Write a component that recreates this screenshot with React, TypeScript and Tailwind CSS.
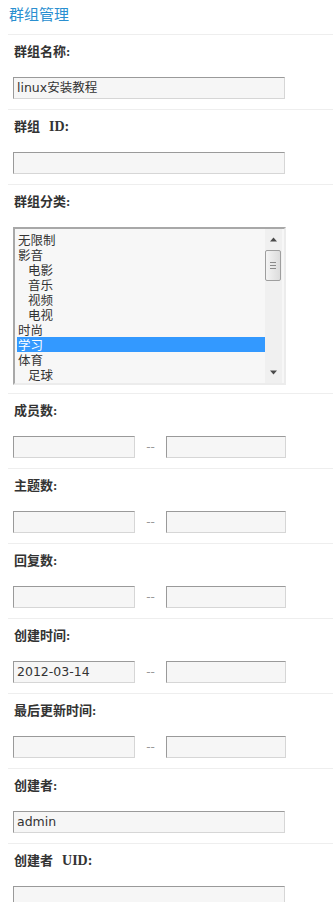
import React from "react";

const inputCls =
  "h-[22px] border border-t-[#9a9a9a] border-l-[#9a9a9a] border-r-[#d6d6d6] border-b-[#d6d6d6] bg-[#f6f6f6] px-[3px] text-[12.5px] leading-[20px] text-[#333] font-['DejaVu_Sans','Noto_Sans_CJK_SC',sans-serif] whitespace-nowrap overflow-hidden";

function TextBox({ value, w }: { value?: string; w: string }) {
  return <div className={`${inputCls} ${w}`}>{value ?? ""}</div>;
}

function Section({
  label,
  children,
  pb = "pb-[10px]",
}: {
  label: React.ReactNode;
  children: React.ReactNode;
  pb?: string;
}) {
  return (
    <div className={`border-t border-[#eeeeee] pt-[9px] pl-[5px] ${pb}`}>
      <div className="h-[16px] pl-[1px] text-[13px] font-bold leading-[16px] text-[#333] font-['Liberation_Serif','Noto_Sans_CJK_SC',serif]">
        {label}
      </div>
      <div className="mt-[17px]">{children}</div>
    </div>
  );
}

function Range({ a }: { a?: string }) {
  return (
    <div className="flex items-center">
      <TextBox value={a} w="w-[122px]" />
      <span className="w-[31px] text-center text-[12px] text-[#999] font-['DejaVu_Sans',sans-serif]">
        --
      </span>
      <TextBox w="w-[120px]" />
    </div>
  );
}

const options: { t: string; sub?: boolean; sel?: boolean }[] = [
  { t: "无限制" },
  { t: "影音" },
  { t: "电影", sub: true },
  { t: "音乐", sub: true },
  { t: "视频", sub: true },
  { t: "电视", sub: true },
  { t: "时尚" },
  { t: "学习", sel: true },
  { t: "体育" },
  { t: "足球", sub: true },
];

function ListBox() {
  return (
    <div className="flex h-[158px] w-[273px] border-2 border-t-[#a8a8a8] border-l-[#a8a8a8] border-r-[#ececec] border-b-[#ececec] bg-[#f7f7f7]">
      <div className="flex-1 pt-[3px] pl-[2px]">
        {options.map((o) => (
          <div
            key={o.t}
            className={`h-[15px] text-[12.5px] leading-[15px] font-['Noto_Sans_CJK_SC',sans-serif] ${
              o.sub ? "pl-[11px]" : "pl-[1px]"
            } ${o.sel ? "bg-[#3399ff] text-white" : "text-[#333]"}`}
          >
            {o.t}
          </div>
        ))}
      </div>
      <div className="relative mr-[2px] w-[17px] bg-[#f0f0f0]">
        <svg className="absolute left-[4px] top-[8px]" width="9" height="5" viewBox="0 0 9 5">
          <path d="M4.5 0.5 L8 4.5 L1 4.5 Z" fill="#4a4a4a" />
        </svg>
        <div className="absolute left-0 top-[21px] flex h-[31px] w-[16px] flex-col items-center justify-center gap-[2px] rounded-[2px] border border-[#9e9e9e] bg-gradient-to-r from-[#f4f4f4] to-[#dcdcdc]">
          <div className="h-px w-[6px] bg-[#8a8a8a]" />
          <div className="h-px w-[6px] bg-[#8a8a8a]" />
          <div className="h-px w-[6px] bg-[#8a8a8a]" />
        </div>
        <svg className="absolute left-[4px] bottom-[8px]" width="9" height="5" viewBox="0 0 9 5">
          <path d="M1 0.5 L8 0.5 L4.5 4.5 Z" fill="#4a4a4a" />
        </svg>
      </div>
    </div>
  );
}

export default function App() {
  return (
    <div className="min-h-[902px] w-[333px] overflow-hidden bg-white pl-[8px]">
      <div className="h-[34px] pt-[4px] pl-[1px] text-[15px] leading-[20px] text-[#2a8fd0] font-['Noto_Sans_CJK_SC',sans-serif]">
        群组管理
      </div>
      <Section label="群组名称:">
        <TextBox value="linux安装教程" w="w-[272px]" />
      </Section>
      <Section
        label={
          <>
            群组<span className="ml-[9px] text-[14px]">ID:</span>
          </>
        }
      >
        <TextBox w="w-[272px]" />
      </Section>
      <Section label="群组分类:" pb="pb-[8px]">
        <ListBox />
      </Section>
      <Section label="成员数:">
        <Range />
      </Section>
      <Section label="主题数:">
        <Range />
      </Section>
      <Section label="回复数:">
        <Range />
      </Section>
      <Section label="创建时间:">
        <Range a="2012-03-14" />
      </Section>
      <Section label="最后更新时间:">
        <Range />
      </Section>
      <Section label="创建者:">
        <TextBox value="admin" w="w-[272px]" />
      </Section>
      <Section
        label={
          <>
            创建者<span className="ml-[9px] text-[14px]">UID:</span>
          </>
        }
      >
        <TextBox w="w-[272px]" />
      </Section>
    </div>
  );
}
